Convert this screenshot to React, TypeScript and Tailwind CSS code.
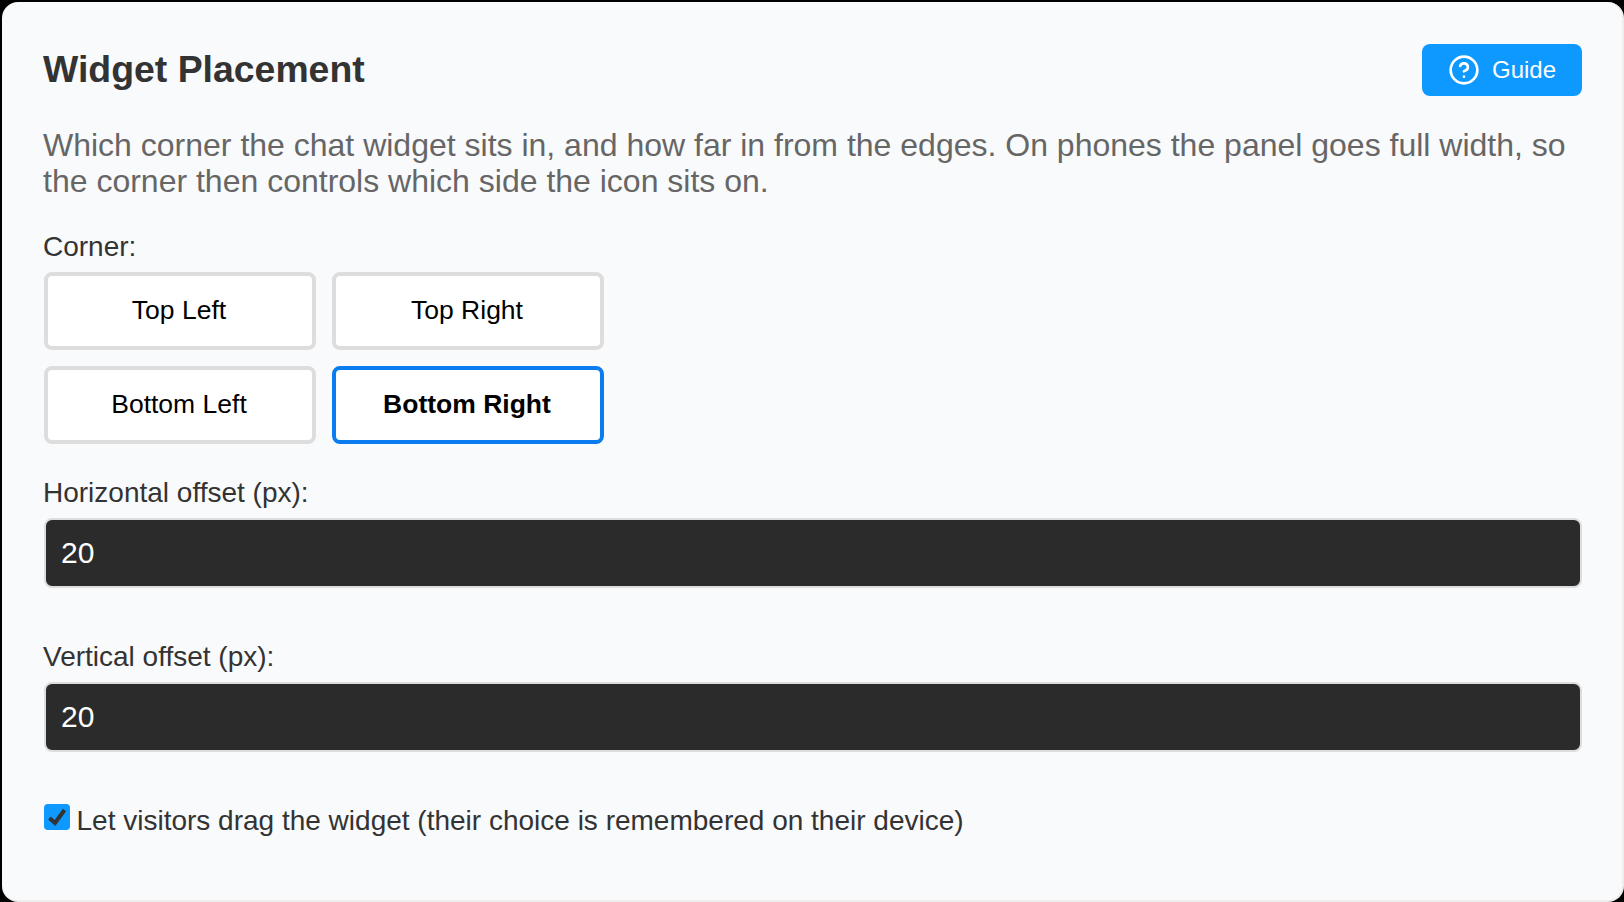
import { CircleHelp } from 'lucide-react'

const CORNERS: { label: string; active?: boolean }[] = [
  { label: 'Top Left' },
  { label: 'Top Right' },
  { label: 'Bottom Left' },
  { label: 'Bottom Right', active: true },
]

function OffsetField({ label, value, className }: { label: string; value: string; className: string }) {
  return (
    <div className={className}>
      <label className="block text-[28px] leading-[32px] text-[#333333]">{label}</label>
      <input
        readOnly
        value={value}
        className="mt-[9px] ml-[1px] block h-[70px] w-[calc(100%-1px)] rounded-[8px] border-2 border-[#dddddd] bg-[#2b2b2b] px-[15px] text-[30px] text-white outline-none"
      />
    </div>
  )
}

export default function App() {
  return (
    <div className="h-screen w-full overflow-hidden bg-black pl-[2px] pt-[2px] font-['Liberation_Sans',Arial,sans-serif]">
      <div className="h-full rounded-[16px] border-b-2 border-r-2 border-[#eeeeee] bg-[#f9fafc] pl-[41px] pr-[40px] pt-[42px]">
        <div className="flex items-center justify-between">
          <h2 className="pb-[2px] text-[37.4px] font-bold leading-[50px] text-[#333333]">Widget Placement</h2>
          <button className="flex h-[52px] w-[160px] items-center justify-center gap-[12px] rounded-[8px] bg-[#0d99ff] text-[24px] text-white">
            <CircleHelp className="h-[32px] w-[32px]" strokeWidth={2} />
            Guide
          </button>
        </div>

        <p className="mt-[31px] text-[32px] leading-[36px] text-[#666666]">
          Which corner the chat widget sits in, and how far in from the edges. On phones the panel goes full width, so
          the corner then controls which side the icon sits on.
        </p>

        <div className="mt-[32px] text-[28px] leading-[32px] text-[#333333]">Corner:</div>
        <div className="mt-[9px] ml-[1px] grid w-[560px] grid-cols-2 gap-[16px]">
          {CORNERS.map((c) => (
            <button
              key={c.label}
              className={
                c.active
                  ? 'h-[78px] rounded-[8px] border-[4px] border-[#0a7cf0] bg-white pr-[2px] text-[26.5px] font-bold text-black'
                  : 'h-[78px] rounded-[8px] border-[4px] border-[#dddddd] bg-white pr-[2px] text-[26.5px] text-black'
              }
            >
              {c.label}
            </button>
          ))}
        </div>

        <OffsetField label="Horizontal offset (px):" value="20" className="mt-[33px]" />
        <OffsetField label="Vertical offset (px):" value="20" className="mt-[53px]" />

        <div className="mt-[53px] ml-[1px] flex items-start">
          <span className="-mt-[1px] flex h-[26px] w-[26px] shrink-0 items-center justify-center rounded-[4px] bg-[#0d99ff]">
            <svg viewBox="0 0 26 26" className="h-[26px] w-[26px]" fill="none">
              <path d="M5.5 14 L11 19 L20.5 6" stroke="#333333" strokeWidth="4" />
            </svg>
          </span>
          <span className="ml-[6.5px] text-[28px] leading-[32px] text-[#333333]">
            Let visitors drag the widget (their choice is remembered on their device)
          </span>
        </div>
      </div>
    </div>
  )
}
